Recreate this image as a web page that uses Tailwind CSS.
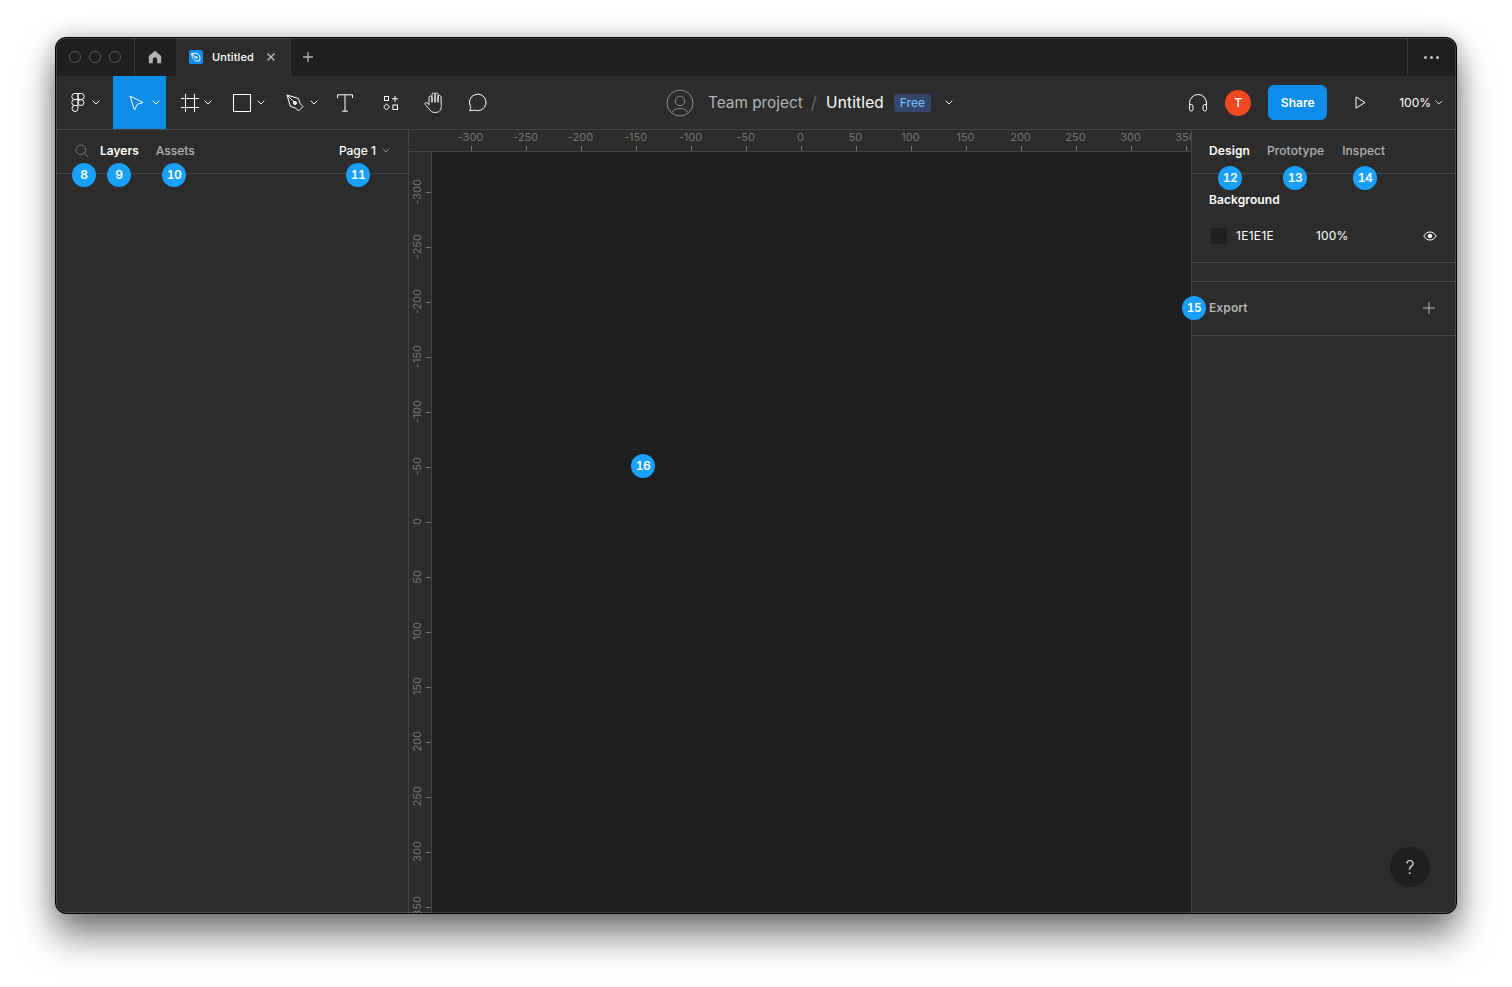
<!DOCTYPE html>
<html lang="en">
<head>
  <meta charset="UTF-8">
  <title>Untitled - Figma</title>
  <script src="https://cdn.jsdelivr.net/npm/@tailwindcss/browser@4"></script>
</head>
<body class="bg-white min-h-screen overflow-hidden font-['Inter',sans-serif]">

<div class="pl-[55px] pt-[37px]">
  <!-- Window -->
  <div class="relative w-[1402px] h-[877px] rounded-[11px] border border-black bg-[#2c2c2c] flex flex-col overflow-hidden shadow-[0_22px_36px_rgba(0,0,0,0.5),0_0_22px_rgba(0,0,0,0.22)]">
    <div class="absolute inset-0 rounded-[10px] border border-white/15 z-30 pointer-events-none"></div>

    <!-- Title bar -->
    <div class="h-[38px] shrink-0 bg-[#1e1e1e] flex items-center text-white">
      <div class="w-[79px] h-full flex items-center gap-2 pl-[13px] border-r border-[#383838]">
        <span class="w-3 h-3 rounded-full border border-[#5a5a5a]"></span>
        <span class="w-3 h-3 rounded-full border border-[#5a5a5a]"></span>
        <span class="w-3 h-3 rounded-full border border-[#5a5a5a]"></span>
      </div>
      <div class="w-[41px] h-full flex items-center justify-center pr-[2px]">
        <svg width="14" height="14" viewBox="0 0 14 14"><path d="M7 .8 13.200 6v7.200H9.200V9.400a2.200 2.200 0 0 0-4.400 0v3.800H.8V6z" fill="#b3b3b3"/></svg>
      </div>
      <div class="w-[115px] h-full bg-[#2c2c2c] flex items-center pl-[13px] border-r border-[#383838]">
        <span class="w-[14px] h-[14px] rounded-[2px] bg-[#0d8ce9] flex items-center justify-center">
          <svg width="12" height="12" viewBox="0 0 12 12" fill="none" stroke="white" stroke-width="1"><path d="M1.500 2.500 6 2.200c2 .4 3.600 2.200 4 4.300L9.600 9.800 6.600 10C4 9.500 2.300 7 1.500 2.500z"/><path d="M2 3l4 4"/><circle cx="6.400" cy="6.400" r=".9" fill="white"/></svg>
        </span>
        <span class="ml-[9px] text-[11px] font-medium tracking-[0.1px]">Untitled</span>
        <svg class="ml-[12px]" width="10" height="10" viewBox="0 0 10 10" stroke="#b3b3b3" stroke-width="1.500"><path d="M1.500 1.500l7 7M8.500 1.500l-7 7"/></svg>
      </div>
      <div class="ml-[11px]">
        <svg width="12" height="12" viewBox="0 0 12 12" stroke="#b3b3b3" stroke-width="1.300"><path d="M6 1v10M1 6h10"/></svg>
      </div>
      <div class="ml-auto w-[49px] h-full border-l border-[#383838] flex items-center justify-center gap-[3px] pr-[1px]">
        <span class="w-[3px] h-[3px] rounded-full bg-[#c4c4c4]"></span>
        <span class="w-[3px] h-[3px] rounded-full bg-[#c4c4c4]"></span>
        <span class="w-[3px] h-[3px] rounded-full bg-[#c4c4c4]"></span>
      </div>
    </div>

    <!-- Toolbar -->
    <div class="h-[54px] shrink-0 flex items-center border-b border-[#444444] text-white">
      <div class="w-[57px] h-full flex items-center pl-[15px]">
        <svg width="14" height="19" viewBox="0 0 14 19" fill="none" stroke="white" stroke-width="1"><path d="M7 .5H3.800a3 3 0 0 0 0 6H7zM7 .5h3.200a3 3 0 0 1 0 6H7zM7 6.500H3.800a3 3 0 0 0 0 6H7zM7 9.500a3 3 0 1 0 6 0 3 3 0 0 0-6 0zM7 12.500H3.800a3 3 0 1 0 3.200 3z"/></svg>
        <svg class="ml-[7px]" width="8" height="5" viewBox="0 0 8 5" fill="none" stroke="white"><path d="M.7.7 4 4 7.300.7"/></svg>
      </div>
      <div class="w-[53px] h-full bg-[#0d8ce9] flex items-center pl-[16px]">
        <svg width="15" height="16" viewBox="0 0 15 16" fill="none" stroke="white" stroke-width="1"><path d="M1 1l13 6.500-5.500 1.700L5.500 15z"/></svg>
        <svg class="ml-[8px]" width="8" height="5" viewBox="0 0 8 5" fill="none" stroke="white"><path d="M.7.7 4 4 7.300.7"/></svg>
      </div>
      <div class="w-[53px] h-full flex items-center pl-[15px]">
        <svg width="18" height="18" viewBox="0 0 18 18" fill="none" stroke="white" stroke-width="1"><path d="M4.500 0v18M13.500 0v18M0 4.500h18M0 13.500h18"/></svg>
        <svg class="ml-[5px]" width="8" height="5" viewBox="0 0 8 5" fill="none" stroke="white"><path d="M.7.7 4 4 7.300.7"/></svg>
      </div>
      <div class="w-[53px] h-full flex items-center pl-[14px]">
        <span class="w-[18px] h-[18px] border border-white"></span>
        <svg class="ml-[6px]" width="8" height="5" viewBox="0 0 8 5" fill="none" stroke="white"><path d="M.7.7 4 4 7.300.7"/></svg>
      </div>
      <div class="w-[53px] h-full flex items-center pl-[14px]">
        <svg width="18" height="18" viewBox="0 0 18 18" fill="none" stroke="white" stroke-width="1"><path d="M1 1l11.500 3.500 1.500 5 3 3-4.500 4.500-3-3-5-1.500z"/><path d="M1 1l6.800 6.800"/><circle cx="9" cy="9" r="1.500" fill="white"/></svg>
        <svg class="ml-[6px]" width="8" height="5" viewBox="0 0 8 5" fill="none" stroke="white"><path d="M.7.7 4 4 7.300.7"/></svg>
      </div>
      <div class="w-[40px] h-full flex items-center justify-center">
        <svg width="16" height="18" viewBox="0 0 16 18" fill="none" stroke="white" stroke-width="1"><path d="M.5 4V.8h15V4M8 .8v16.400M5 17.200h6"/></svg>
      </div>
      <div class="w-[40px] ml-[6px] h-full flex items-center justify-center">
        <svg width="16" height="16" viewBox="0 0 16 16" fill="none" stroke="white" stroke-width="1"><rect x="1.500" y="1.500" width="4" height="4"/><path d="M12 .8v6M9 3.800h6"/><path d="M3.500 8.800 6.400 12 3.500 15 .7 12z"/><rect x="10" y="10" width="4.500" height="4.500"/></svg>
      </div>
      <div class="w-[40px] ml-[3px] h-full flex items-center justify-center">
        <svg width="20" height="22" viewBox="0 0 20 22" fill="none" stroke="white" stroke-width="0.9" stroke-linecap="round" stroke-linejoin="round"><path d="M5 12.500V5.500a1.500 1.500 0 0 1 3 0V10M8 10V2.500a1.500 1.500 0 0 1 3 0V10M11 10V2.500a1.500 1.500 0 0 1 3 0V10M14 10V5a1.500 1.500 0 0 1 3 0l.3 9.500c0 4-2.500 6-6.300 6-3 0-4.500-1.500-5.800-3.500L1.200 12.500c-.8-1.300.7-2.600 1.900-1.600L5 12.500"/></svg>
      </div>
      <div class="w-[40px] ml-[4px] h-full flex items-center justify-center">
        <svg width="20" height="19" viewBox="0 0 20 19" fill="none" stroke="white" stroke-width="1"><path d="M1.500 17.500c1-1.500 1.300-2.800.9-4.200A8.300 8.300 0 1 1 10.500 17.700c-1.700 0-3-.3-4-.7-1.400.6-3 .7-5 .5z"/></svg>
      </div>

      <!-- File name -->
      <div class="ml-[168px] flex items-center">
        <svg width="28" height="28" viewBox="0 0 28 28" fill="none" stroke="#8c8c8c" stroke-width="1"><circle cx="14" cy="14" r="13"/><circle cx="14" cy="12" r="4.800"/><path d="M5.500 23.800C7.500 20.600 10.500 19.500 14 19.500s6.500 1.100 8.500 4.300"/></svg>
        <span class="ml-[14px] text-[15.350px] text-[#b3b3b3] leading-none">Team project</span>
        <span class="ml-[8px] text-[18px] text-[#6e6e6e] font-light leading-none">/</span>
        <span class="ml-[9px] text-[15.350px] tracking-[0.2px] text-white leading-none">Untitled</span>
        <span class="ml-[10px] w-[37px] h-[18px] rounded-[3px] bg-[#33456b] text-[#74b7f3] text-[12px] font-medium flex items-center justify-center">Free</span>
        <svg class="ml-[14px]" width="8" height="5" viewBox="0 0 8 5" fill="none" stroke="white"><path d="M.7.7 4 4 7.300.7"/></svg>
      </div>

      <!-- Right side -->
      <div class="ml-auto flex items-center pr-[13px]">
        <svg width="20" height="19" viewBox="0 0 20 19" fill="none" stroke="white" stroke-width="1"><path d="M1.500 12V10a8.500 8.500 0 0 1 17 0v2"/><rect x="1.500" y="11.500" width="3.500" height="6.500" rx="1.700"/><rect x="15" y="11.500" width="3.500" height="6.500" rx="1.700"/></svg>
        <span class="ml-[17px] w-[26px] h-[26px] rounded-full bg-[#f24822] text-white text-[12px] font-medium flex items-center justify-center">T</span>
        <button class="ml-[17px] w-[59px] h-[35px] rounded-[6px] bg-[#0d8ce9] text-white text-[12px] font-semibold">Share</button>
        <svg class="ml-[28px]" width="11" height="13" viewBox="0 0 11 13" fill="none" stroke="white" stroke-width="1"><path d="M1 .9 10 6.500 1 12.100z"/></svg>
        <span class="ml-[33px] text-[12px] font-normal">100%</span>
        <svg class="ml-[4px]" width="8" height="5" viewBox="0 0 8 5" fill="none" stroke="#d0d0d0"><path d="M.7.7 4 4 7.300.7"/></svg>
      </div>
    </div>

    <!-- Body -->
    <div class="flex-1 flex min-h-0">
      <!-- Left panel -->
      <div class="w-[353px] shrink-0 border-r border-[#444444]">
        <div class="h-[44px] border-b border-[#444444] flex items-center text-[12px] pb-[2px]">
          <svg class="ml-[19px]" width="14" height="14" viewBox="0 0 14 14" fill="none" stroke="#757575" stroke-width="1"><circle cx="5.800" cy="5.800" r="4.800"/><path d="M9.300 9.300 13.500 13.500"/></svg>
          <span class="ml-[11px] text-white font-semibold">Layers</span>
          <span class="ml-[17px] text-[#b3b3b3] font-medium">Assets</span>
          <span class="ml-auto text-white font-medium">Page 1</span>
          <svg class="ml-[6px] mr-[18px]" width="8" height="5" viewBox="0 0 8 5" fill="none" stroke="#8c8c8c"><path d="M.7.7 4 4 7.300.7"/></svg>
        </div>
      </div>

      <!-- Canvas with rulers -->
      <div class="flex-1 flex flex-col min-w-0 overflow-hidden">
        <div class="h-[22px] shrink-0 border-b border-[#444444] flex pl-[35px] overflow-hidden">
          <div id="rulerX" class="flex"></div>
        </div>
        <div class="flex-1 flex min-h-0">
          <div class="w-[23px] shrink-0 border-r border-[#444444] overflow-hidden pt-[13px]">
            <div id="rulerY" class="flex flex-col"></div>
          </div>
          <div class="flex-1 bg-[#1e1e1e]"></div>
        </div>
      </div>

      <!-- Right panel -->
      <div class="w-[265px] shrink-0 border-l border-[#444444] relative tracking-[0.1px]">
        <div class="h-[44px] border-b border-[#444444] flex items-center text-[12px] pl-[17px] pb-[2px]">
          <span class="text-white font-semibold">Design</span>
          <span class="ml-[17px] text-[#b3b3b3] font-medium">Prototype</span>
          <span class="ml-[18px] text-[#b3b3b3] font-medium">Inspect</span>
        </div>
        <div class="h-[89px] border-b border-[#444444] pl-[17px] pt-[18px]">
          <div class="text-[12px] text-white font-semibold leading-[16px]">Background</div>
          <div class="mt-[19px] flex items-center text-[12px] text-white">
            <span class="ml-[2px] w-4 h-4 bg-[#1e1e1e]"></span>
            <span class="ml-[9px] tracking-[0.3px]">1E1E1E</span>
            <span class="ml-[42px]">100%</span>
            <svg class="ml-auto mr-[19px]" width="14" height="10" viewBox="0 0 14 10" fill="none" stroke="white" stroke-width="1"><path d="M.8 5C2.500 2.200 4.500 1 7 1s4.500 1.200 6.200 4C11.500 7.800 9.500 9 7 9S2.500 7.800.8 5z"/><circle cx="7" cy="5" r="1.800" fill="white"/></svg>
          </div>
        </div>
        <div class="h-[19px] border-b border-[#444444]"></div>
        <div class="h-[54px] border-b border-[#444444] flex items-center pl-[17px] pb-[2px] text-[12px]">
          <span class="text-[#b3b3b3] font-semibold">Export</span>
          <svg class="ml-auto mr-[21px]" width="12" height="12" viewBox="0 0 12 12" stroke="#b3b3b3" stroke-width="1"><path d="M6 0v12M0 6h12"/></svg>
        </div>
        <!-- Help button -->
        <div class="absolute right-[26px] bottom-[26px] w-10 h-10 rounded-full bg-[#1e1e1e] text-[#d9d9d9] text-[18px] font-light flex items-center justify-center">?</div>
      </div>
    </div>

    <!-- Numbered callouts -->
    <span class="absolute left-[16px] top-[125px] w-6 h-6 rounded-full bg-[#18a0fb] text-white text-[12px] font-semibold tabular-nums tracking-[-0.4px] flex items-center justify-center">8</span>
    <span class="absolute left-[51px] top-[125px] w-6 h-6 rounded-full bg-[#18a0fb] text-white text-[12px] font-semibold tabular-nums tracking-[-0.4px] flex items-center justify-center">9</span>
    <span class="absolute left-[106px] top-[125px] w-6 h-6 rounded-full bg-[#18a0fb] text-white text-[12px] font-semibold tabular-nums tracking-[-0.4px] flex items-center justify-center">10</span>
    <span class="absolute left-[290px] top-[125px] w-6 h-6 rounded-full bg-[#18a0fb] text-white text-[12px] font-semibold tabular-nums tracking-[-0.4px] flex items-center justify-center">11</span>
    <span class="absolute left-[1162px] top-[128px] w-6 h-6 rounded-full bg-[#18a0fb] text-white text-[12px] font-semibold tabular-nums tracking-[-0.4px] flex items-center justify-center">12</span>
    <span class="absolute left-[1227px] top-[128px] w-6 h-6 rounded-full bg-[#18a0fb] text-white text-[12px] font-semibold tabular-nums tracking-[-0.4px] flex items-center justify-center">13</span>
    <span class="absolute left-[1297px] top-[128px] w-6 h-6 rounded-full bg-[#18a0fb] text-white text-[12px] font-semibold tabular-nums tracking-[-0.4px] flex items-center justify-center">14</span>
    <span class="absolute left-[1126px] top-[258px] w-6 h-6 rounded-full bg-[#18a0fb] text-white text-[12px] font-semibold tabular-nums tracking-[-0.4px] flex items-center justify-center">15</span>
    <span class="absolute left-[575px] top-[416px] w-6 h-6 rounded-full bg-[#18a0fb] text-white text-[12px] font-semibold tabular-nums tracking-[-0.4px] flex items-center justify-center">16</span>
  </div>
</div>

<script>
  // Ruler marks, every 50 units
  const rulerX = document.getElementById('rulerX');
  for (let v = -300; v <= 350; v += 50) {
    const cell = document.createElement('div');
    cell.className = 'w-[55px] shrink-0 h-full flex flex-col items-center justify-between';
    const label = document.createElement('span');
    label.className = 'text-[11px] leading-none mt-[2px] -translate-x-px text-[#757575]';
    label.textContent = v;
    const tick = document.createElement('span');
    tick.className = 'w-px h-[5px] bg-[#757575]';
    cell.append(label, tick);
    rulerX.appendChild(cell);
  }

  const rulerY = document.getElementById('rulerY');
  for (let v = -300; v <= 350; v += 50) {
    const cell = document.createElement('div');
    cell.className = 'h-[55px] shrink-0 flex items-center justify-between pl-[3px]';
    const label = document.createElement('span');
    label.className = 'text-[11px] leading-none rotate-180 -translate-y-px [writing-mode:vertical-rl] text-[#757575]';
    label.textContent = v;
    const tick = document.createElement('span');
    tick.className = 'w-[5px] h-px bg-[#757575]';
    cell.append(label, tick);
    rulerY.appendChild(cell);
  }
</script>

</body>
</html>
